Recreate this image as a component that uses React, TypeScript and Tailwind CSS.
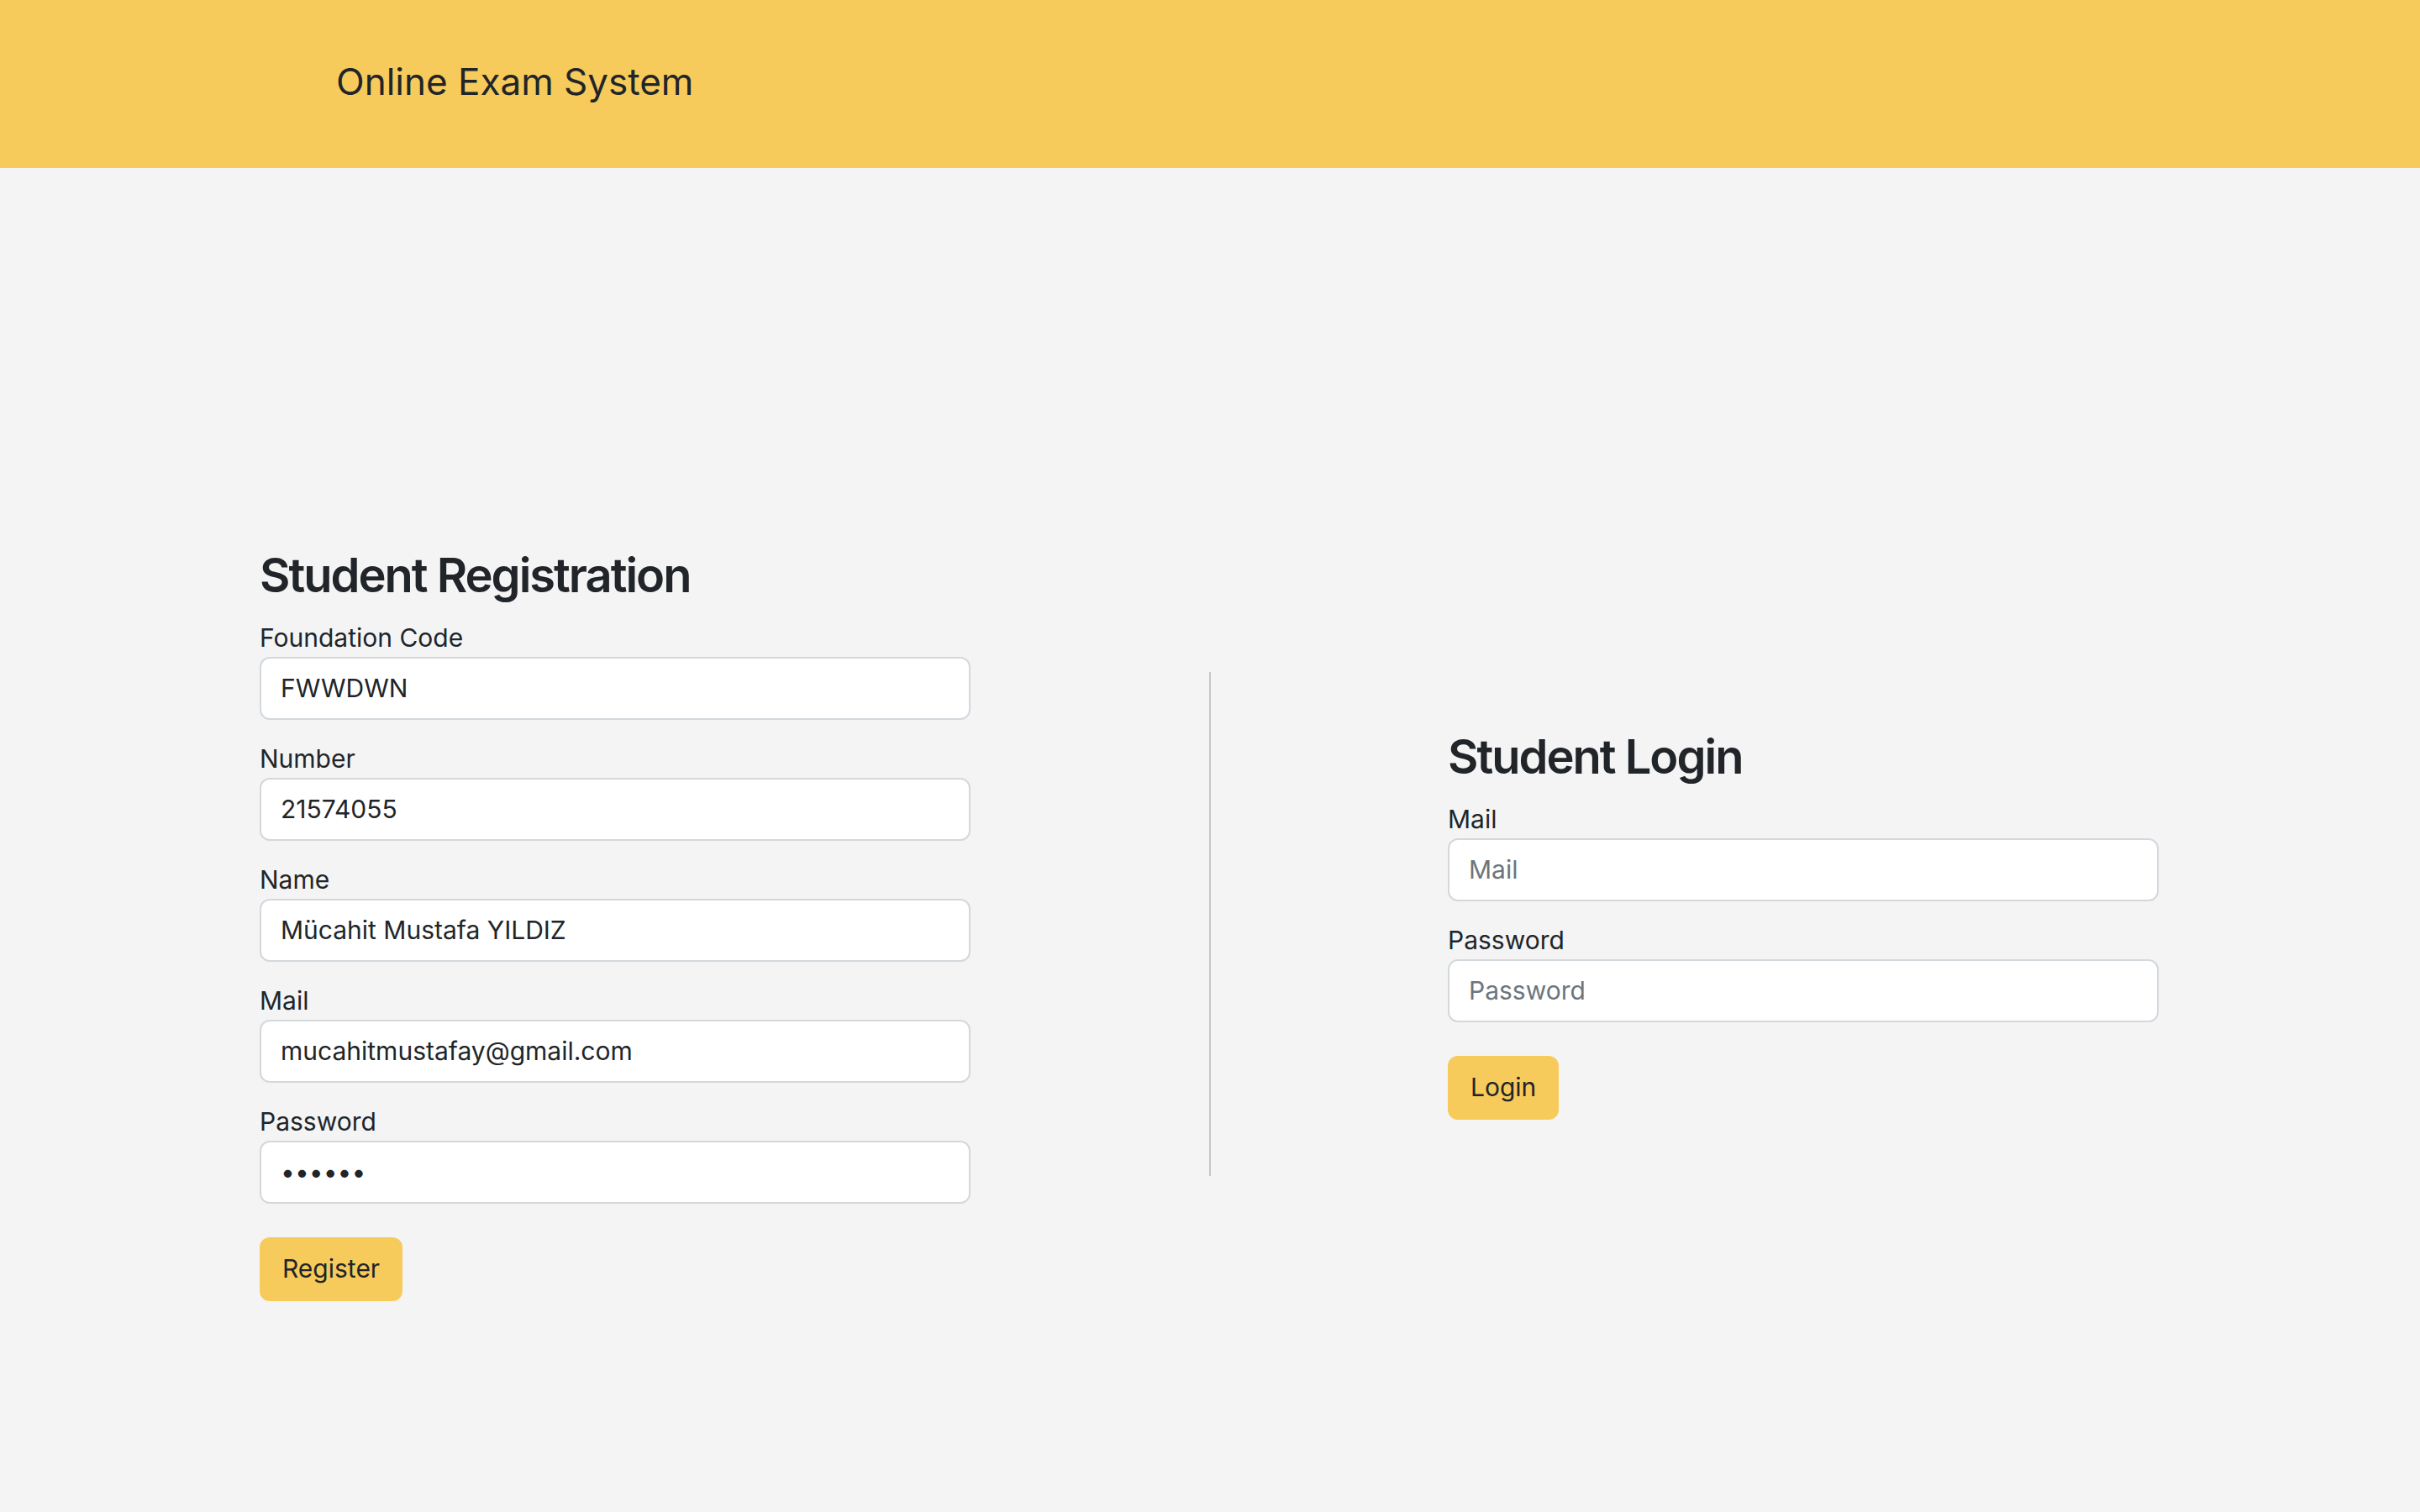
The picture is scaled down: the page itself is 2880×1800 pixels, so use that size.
import { useState } from "react";

const fieldClass =
  "h-[75px] w-full rounded-[12px] border-2 border-[#d3d8dd] bg-white px-[23px] text-[30px] text-[#212529] placeholder:text-[#6c757d] outline-none";

function Field({
  label,
  value,
  type = "text",
  placeholder,
}: {
  label: string;
  value?: string;
  type?: string;
  placeholder?: string;
}) {
  const [v, setV] = useState(value ?? "");
  return (
    <div className="mb-[24px] flex flex-col">
      <label className="text-[30px] leading-[45px] text-[#212529]">{label}</label>
      <input
        type={type}
        value={v}
        placeholder={placeholder}
        onChange={(e) => setV(e.target.value)}
        className={fieldClass}
      />
    </div>
  );
}

function Heading({ children }: { children: string }) {
  return (
    <h3 className="mb-[18px] text-[56px] font-semibold leading-[67px] tracking-[-2px] text-[#212529]">
      {children}
    </h3>
  );
}

function YellowButton({ children }: { children: string }) {
  return (
    <button
      type="button"
      className="mt-[16px] h-[76px] rounded-[12px] bg-[#f7cb5b] px-[27px] text-[30px] text-[#212529]"
    >
      {children}
    </button>
  );
}

export default function App() {
  return (
    <div className="min-h-screen bg-[#f4f4f4] font-['Inter','Roboto',sans-serif]">
      {/* Top bar */}
      <header className="flex h-[200px] items-center bg-[#f7cb5b] pb-[6px] pl-[400px]">
        <span className="text-[44px] text-[#212529]">Online Exam System</span>
      </header>

      <main className="flex h-[1800px] items-center justify-center pr-[2px]">
        {/* Registration */}
        <form className="flex w-[846px] flex-col items-start" onSubmit={(e) => e.preventDefault()}>
          <Heading>Student Registration</Heading>
          <div className="w-full">
            <Field label="Foundation Code" value="FWWDWN" />
            <Field label="Number" value="21574055" />
            <Field label="Name" value="Mücahit Mustafa YILDIZ" />
            <Field label="Mail" value="mucahitmustafay@gmail.com" />
            <Field label="Password" type="password" value="123456" />
          </div>
          <YellowButton>Register</YellowButton>
        </form>

        <div className="ml-[284px] mr-[282px] h-[600px] w-[2px] bg-[#c8c8c8]" />

        {/* Login */}
        <form className="flex w-[846px] flex-col items-start" onSubmit={(e) => e.preventDefault()}>
          <Heading>Student Login</Heading>
          <div className="w-full">
            <Field label="Mail" placeholder="Mail" />
            <Field label="Password" type="password" placeholder="Password" />
          </div>
          <YellowButton>Login</YellowButton>
        </form>
      </main>
    </div>
  );
}
